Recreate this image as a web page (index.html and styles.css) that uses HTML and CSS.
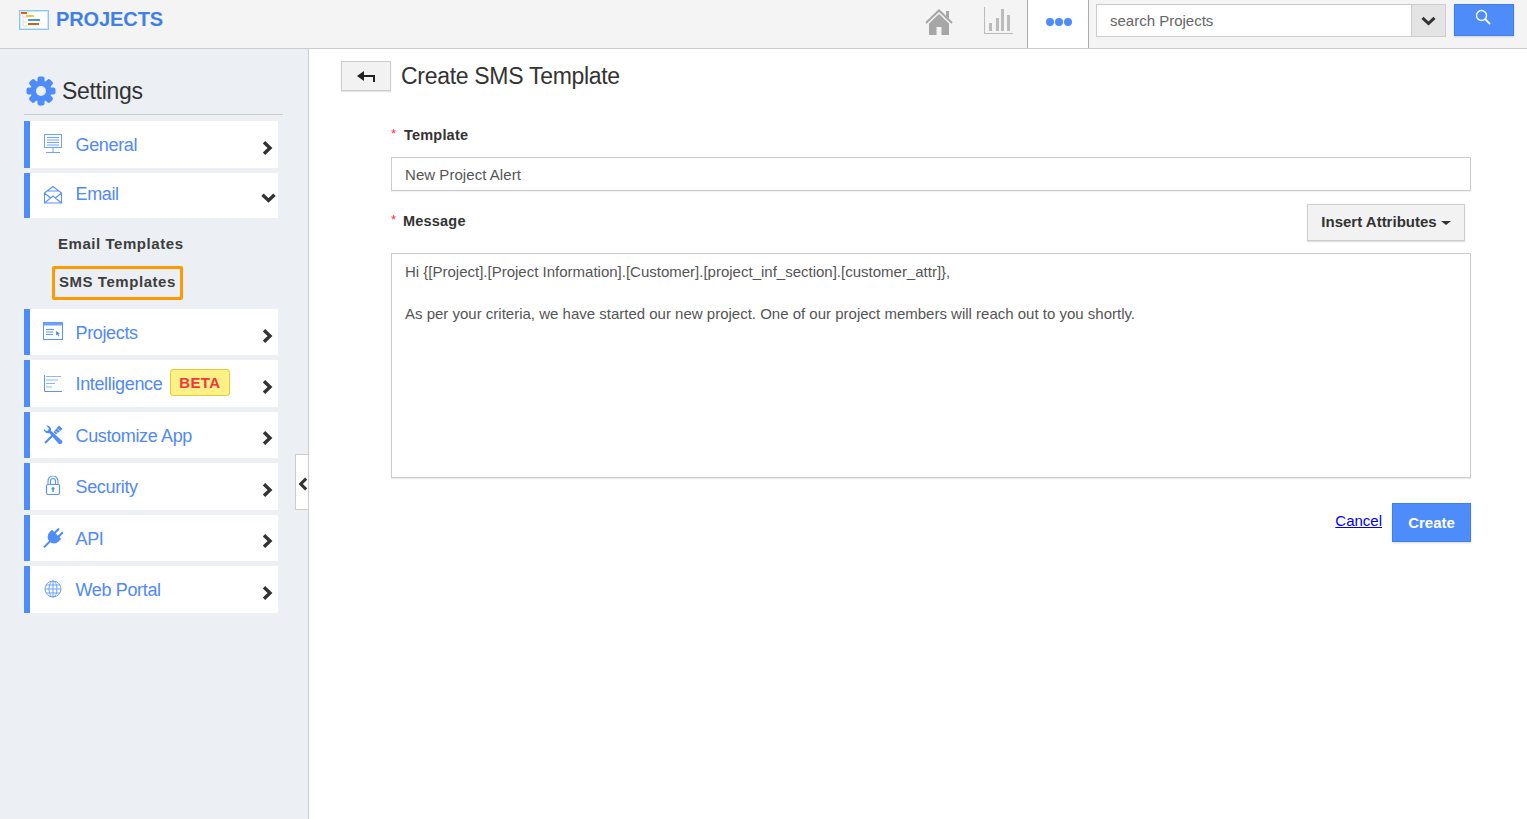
FILE: index.html
```html
<!DOCTYPE html>
<html lang="en">
<head>
<meta charset="utf-8">
<title>Create SMS Template</title>
<link rel="stylesheet" href="styles.css">
</head>
<body>
<header class="topbar">
  <svg class="logo" width="30" height="20" viewBox="0 0 30 20"><rect x=".5" y=".5" width="29" height="19" fill="#fff" stroke="#8cc4f2"/><rect x="1.500" y="1.500" width="27" height="17" fill="none" stroke="#cfe6f8"/><path d="M4 3v13h4M4 7h4M4 12h4" fill="none" stroke="#ddd"/><rect x="2" y="2" width="6" height="2" fill="#d9600f"/><rect x="7" y="5" width="8" height="2" fill="#f5c92e"/><rect x="9" y="9" width="12" height="2" fill="#3d9be0"/><rect x="9" y="13" width="11" height="2" fill="#d9600f"/></svg>
  <div class="brand">PROJECTS</div>
  <svg class="home" width="28" height="28" viewBox="0 0 28 28"><path d="M1 15 14 2.500 27 15" fill="none" stroke="#a6a6a6" stroke-width="2"/><path d="M21 3h3v8l-3-3z" fill="#a6a6a6"/><path d="M14 6 4 15.500V27h7.500v-8h5v8H24V15.500z" fill="#a6a6a6"/></svg>
  <svg class="chart" width="29" height="28" viewBox="0 0 29 28"><path d="M.5 0v26.500H29" fill="none" stroke="#bbb"/><path d="M5 16h3v8H5zM12 11h3v13h-3zM17 2h3v22h-3zM23 8h3v16h-3z" fill="#bbb"/></svg>
  <div class="more-tab">
    <svg width="28" height="10" viewBox="0 0 28 10"><circle cx="5" cy="5" r="4" fill="#4d8cf9"/><circle cx="14" cy="5" r="4" fill="#4d8cf9"/><circle cx="23" cy="5" r="4" fill="#4d8cf9"/></svg>
  </div>
  <div class="search">
    <div class="search-text">search Projects</div>
    <div class="search-drop"><svg width="15" height="11" viewBox="0 0 15 11"><path d="M1.500 1.800 7.500 7.500l6-5.700" fill="none" stroke="#333" stroke-width="3"/></svg></div>
  </div>
  <button class="search-btn" type="button"><svg width="16" height="16" viewBox="0 0 16 16"><circle cx="6.500" cy="6.500" r="5" fill="none" stroke="#fff" stroke-width="1.400"/><path d="m10 10 5 5" stroke="#fff" stroke-width="1.800"/></svg></button>
</header>

<div class="layout">
  <aside class="sidebar">
    <div class="side-title">
      <svg class="gear" width="30" height="30" viewBox="0 0 30 30">
        <g fill="#4d8cf9"><rect x="11.500" y="0.500" width="7" height="29" rx="2"/><rect x="11.500" y="0.500" width="7" height="29" rx="2" transform="rotate(45 15 15)"/><rect x="11.500" y="0.500" width="7" height="29" rx="2" transform="rotate(90 15 15)"/><rect x="11.500" y="0.500" width="7" height="29" rx="2" transform="rotate(135 15 15)"/><circle cx="15" cy="15" r="10.500"/></g>
        <circle cx="15" cy="15" r="5" fill="#eceff4"/>
      </svg>
      <span>Settings</span>
    </div>

    <a class="row row-first">
      <svg class="ico" width="20" height="20" viewBox="0 0 20 20"><g fill="none" stroke="#6ea2fa"><rect x="1.500" y=".5" width="17" height="13"/><path d="M4 3.500h12M4 6h12M4 8.500h12M4 11h12M10 14v4M3 18.500h14"/></g></svg>
      <span class="row-label">General</span>
      <svg class="chev" width="11" height="14" viewBox="0 0 11 14"><path d="m2 1.200 6 5.800-6 5.800" fill="none" stroke="#333" stroke-width="3.400"/></svg>
    </a>
    <a class="row row-open">
      <svg class="ico" width="20" height="20" viewBox="0 0 20 20"><path d="M1.500 8 10 1.500 18.500 8v10h-17zM1.500 8l6 5M18.500 8l-6 5M1.500 18l8.500-7 8.500 7M4.500 6h11" fill="none" stroke="#5a94f7" stroke-width="1.100"/></svg>
      <span class="row-label">Email</span>
      <svg class="chev-down" width="15" height="11" viewBox="0 0 15 11"><path d="M1.500 1.800 7.500 7.500l6-5.700" fill="none" stroke="#333" stroke-width="3.400"/></svg>
    </a>
    <div class="sub-list">
      <div class="sub-item">Email Templates</div>
      <div class="sub-item sub-active">SMS Templates</div>
    </div>
    <a class="row">
      <svg class="ico" width="20" height="20" viewBox="0 0 20 20"><g fill="none" stroke="#5a94f7"><rect x=".5" y=".5" width="19" height="17"/><path d="M3 7.500h8M3 10h7M3 12.500h7"/></g><rect x=".5" y=".5" width="19" height="3" fill="#6ea2fa"/><path d="m13 9 4 2.500-1.600.5 1 2-1 .5-1-2-1.200 1z" fill="#4d8cf9"/></svg>
      <span class="row-label">Projects</span>
      <svg class="chev" width="11" height="14" viewBox="0 0 11 14"><path d="m2 1.200 6 5.800-6 5.800" fill="none" stroke="#333" stroke-width="3.400"/></svg>
    </a>
    <a class="row">
      <svg class="ico" width="20" height="20" viewBox="0 0 20 20"><path d="M1.500 1v16.500H19" fill="none" stroke="#5a94f7"/><path d="M3 2.500h15M3 6h12M3 9.500h9M3 13h6" fill="none" stroke="#8db6fa" stroke-width="1.200"/></svg>
      <span class="row-label row-label-high">Intelligence</span>
      <span class="beta">BETA</span>
      <svg class="chev" width="11" height="14" viewBox="0 0 11 14"><path d="m2 1.200 6 5.800-6 5.800" fill="none" stroke="#333" stroke-width="3.400"/></svg>
    </a>
    <a class="row">
      <svg class="ico" width="20" height="20" viewBox="0 0 20 20"><path d="M.8 3.500a4.300 4.300 0 0 0 5.400 4.600L15.500 18.400a2 2 0 0 0 3.200-3L8 5.800A4.300 4.300 0 0 0 3.200.6L6 3.600 5 5.500l-2 .4z" fill="#4d8cf9"/><path d="M2 18 10.500 9.500" stroke="#4d8cf9" stroke-width="2.200"/><path d="m10.500 7 5.500-6.500 3.500 3.500L13 9.500z" fill="#4d8cf9"/><path d="m12.500 6 2.500 2.500M14.500 3.800l2.500 2.500" stroke="#fff" stroke-width=".8"/></svg>
      <span class="row-label">Customize App</span>
      <svg class="chev" width="11" height="14" viewBox="0 0 11 14"><path d="m2 1.200 6 5.800-6 5.800" fill="none" stroke="#333" stroke-width="3.400"/></svg>
    </a>
    <a class="row">
      <svg class="ico" width="20" height="20" viewBox="0 0 20 20"><path d="M5 8V5a5 5 0 0 1 10 0v3M7.500 8V5a2.500 2.500 0 0 1 5 0v3" fill="none" stroke="#5a94f7" stroke-width="1.100"/><rect x="3.500" y="8.500" width="13" height="10" rx="1.500" fill="none" stroke="#5a94f7" stroke-width="1.200"/><circle cx="10" cy="12.500" r="1.500" fill="#4d8cf9"/><rect x="9.300" y="13" width="1.400" height="3" fill="#4d8cf9"/></svg>
      <span class="row-label">Security</span>
      <svg class="chev" width="11" height="14" viewBox="0 0 11 14"><path d="m2 1.200 6 5.800-6 5.800" fill="none" stroke="#333" stroke-width="3.400"/></svg>
    </a>
    <a class="row">
      <svg class="ico" width="20" height="20" viewBox="0 0 20 20"><g transform="rotate(45 10 10)" fill="#4d8cf9"><rect x="6.500" y="-1" width="2.200" height="7" rx="1"/><rect x="11.800" y="-1" width="2.200" height="7" rx="1"/><path d="M3.500 5h13v3.500a6.500 6.500 0 0 1-13 0z"/><rect x="9.200" y="13" width="2" height="10"/></g></svg>
      <span class="row-label">API</span>
      <svg class="chev" width="11" height="14" viewBox="0 0 11 14"><path d="m2 1.200 6 5.800-6 5.800" fill="none" stroke="#333" stroke-width="3.400"/></svg>
    </a>
    <a class="row row-last">
      <svg class="ico" width="20" height="20" viewBox="0 0 20 20"><g fill="none" stroke="#6ea2fa"><circle cx="10" cy="10" r="8"/><ellipse cx="10" cy="10" rx="4" ry="8"/><path d="M10 2v16M2 10h16M3 6h14M3 14h14"/></g></svg>
      <span class="row-label">Web Portal</span>
      <svg class="chev" width="11" height="14" viewBox="0 0 11 14"><path d="m2 1.200 6 5.800-6 5.800" fill="none" stroke="#333" stroke-width="3.400"/></svg>
    </a>

    <div class="collapse"><svg width="11" height="14" viewBox="0 0 11 14"><path d="M9 1.200 3 7l6 5.800" fill="none" stroke="#333" stroke-width="3.400"/></svg></div>
  </aside>

  <main class="content">
    <div class="page-head">
      <button class="back" type="button"><svg width="18" height="12" viewBox="0 0 18 12"><path d="M7 0 0 5l7 5z" fill="#222"/><path d="M5 5h12v6" fill="none" stroke="#222" stroke-width="2"/></svg></button>
      <h1 class="page-title">Create SMS Template</h1>
    </div>
    <form class="form">
      <div class="label label-template"><span class="req">*</span><span class="label-text">Template</span></div>
      <div class="field">New Project Alert</div>
      <div class="message-head">
        <div class="label"><span class="req">*</span><span class="label-text label-text-msg">Message</span></div>
        <button class="insert" type="button">Insert Attributes<span class="caret"></span></button>
      </div>
      <div class="area">
        <p class="area-line">Hi {[Project].[Project Information].[Customer].[project_inf_section].[customer_attr]},</p>
        <p class="area-line">&nbsp;</p>
        <p class="area-line">As per your criteria, we have started our new project. One of our project members will reach out to you shortly.</p>
      </div>
      <div class="actions">
        <a class="cancel" href="#">Cancel</a>
        <button class="create" type="button">Create</button>
      </div>
    </form>
  </main>
</div>
</body>
</html>
```

FILE: styles.css
```css
* { box-sizing: border-box; }
html, body { margin: 0; height: 100%; overflow: hidden; }
body { font-family: "Liberation Sans", Arial, sans-serif; color: #333; background: #fff; display: flex; flex-direction: column; }

.topbar { height: 49px; flex: none; display: flex; align-items: flex-start; background: #f4f4f4; border-bottom: 1px solid #ccc; padding-left: 19px; }
.logo { margin-top: 10px; flex: none; }
.brand { margin-left: 7px; margin-top: 7px; font-size: 20px; line-height: 24px; font-weight: 700; color: #3f7fe8; letter-spacing: -.1px; }
.home { margin-left: auto; margin-top: 8px; }
.chart { margin-left: 31px; margin-top: 7px; }
.more-tab { width: 62px; height: 48px; margin-left: 14px; background: #fff; border-left: 1px solid #aaa; border-right: 1px solid #aaa; display: flex; align-items: center; justify-content: center; padding: 0 0 4px 2px; }
.search { width: 350px; height: 33px; margin-left: 7px; margin-top: 4px; display: flex; background: #fff; border: 1px solid #ccc; }
.search-text { flex: 1; padding-left: 13px; font-size: 15px; line-height: 31px; color: #666; }
.search-drop { width: 34px; background: #e4e4e4; border-left: 1px solid #ccc; display: flex; align-items: center; justify-content: center; padding-top: 2px; }
.search-btn { width: 60px; height: 32px; margin-left: 8px; margin-right: 13px; margin-top: 4px; padding: 0 2px 3px 0; background: #4d8cf9; border: 1px solid #3f7fe8; box-shadow: 0 1px 2px rgba(0,0,0,.15); }

.layout { flex: 1; display: flex; min-height: 0; }
.sidebar { position: relative; flex: none; width: 309px; background: #eceff4; border-right: 1px solid #ccc; padding: 0 0 0 24px; }
.side-title { width: 259px; height: 66px; padding-top: 27px; display: flex; align-items: flex-start; border-bottom: 1px solid #ccc; margin-bottom: 6.2px; font-size: 23px; line-height: 30px; color: #333; }
.side-title span { letter-spacing: -.3px; margin-left: 6px; }
.gear { margin-left: 2px; flex: none; }

.row { width: 254px; height: 46.4px; margin-bottom: 5px; display: flex; align-items: center; background: #fff; border-left: 6px solid #4d8cf9; padding-left: 13px; }
.row-open { height: 45px; margin-bottom: 0; }
.row-last { height: 47px; }
.ico { flex: none; }
.row-label { margin-left: 12.5px; margin-top: 3px; font-size: 18px; letter-spacing: -.35px; color: #5189f7; white-space: nowrap; }
.row-open .row-label { margin-top: 0; margin-bottom: 1px; }
.row-label-high { margin-top: 1px; }
.chev { flex: none; margin-left: auto; margin-right: 5px; margin-top: 7px; }
.chev-down { flex: none; margin-left: auto; margin-right: 2px; margin-top: 6px; }
.beta { margin-left: 7.5px; width: 60px; height: 27px; background: #fdf084; border: 1px solid #e2cc3a; border-radius: 3px; color: #f0373f; font-size: 15px; line-height: 25px; font-weight: 700; text-align: center; letter-spacing: .4px; margin-bottom: 2px; }

.sub-list { height: 91.400px; padding-left: 28px; padding-top: 14px; }
.sub-item { width: 131px; height: 30px; padding-left: 6px; font-size: 15px; line-height: 24px; font-weight: 700; color: #3d3d3d; letter-spacing: .55px; white-space: nowrap; }
.sub-active { height: 34px; margin-top: 4px; padding-left: 4px; border: 3px solid #ff9900; border-radius: 2px; line-height: 26px; }

.collapse { position: absolute; left: 295px; top: 405px; width: 13px; height: 56px; background: #fff; border: 1px solid #ccc; border-right: none; display: flex; align-items: center; padding: 4px 0 0 2px; }

.content { flex: 1; min-width: 0; padding: 12px 56px 0 32px; }
.page-head { display: flex; align-items: flex-start; }
.back { width: 50px; height: 30px; padding: 4px 0 0; background: #f2f2f2; border: 1px solid #ccc; box-shadow: 0 1px 1px rgba(0,0,0,.1); }
.page-title { margin: 0 0 0 10px; font-size: 23px; line-height: 30px; font-weight: 400; color: #333; letter-spacing: -.3px; }

.form { padding-left: 50px; }
.label { display: flex; align-items: flex-start; font-size: 14.500px; line-height: 20px; font-weight: 700; color: #333; }
.label-template { margin-top: 34px; }
.req { color: #f33; font-weight: 400; font-size: 13px; line-height: 16px; width: 13px; margin-top: 1px; }
.label-text { letter-spacing: .2px; }
.label-text-msg { margin-left: -1px; }
.field { margin-top: 12px; height: 34px; padding-left: 13px; border: 1px solid #ccc; font-size: 15px; letter-spacing: .05px; line-height: 33px; color: #555; box-shadow: 0 1px 1px rgba(0,0,0,.05); }
.message-head { display: flex; justify-content: space-between; align-items: flex-start; margin-top: 13px; padding-right: 6px; }
.message-head .label { margin-top: 7px; }
.insert { width: 158px; height: 37px; padding: 0 0 2px; background: #f2f2f2; border: 1px solid #ccc; box-shadow: 0 1px 1px rgba(0,0,0,.12); font: 700 15px "Liberation Sans", Arial, sans-serif; color: #333; }
.caret { display: inline-block; margin-left: 4px; vertical-align: middle; border-top: 4px solid #333; border-left: 5px solid transparent; border-right: 5px solid transparent; }
.area { margin-top: 12px; height: 225px; padding: 7px 13px; border: 1px solid #ccc; box-shadow: 0 1px 1px rgba(0,0,0,.08); }
.area-line { margin: 0; font-size: 15px; line-height: 21px; color: #555; }
.actions { margin-top: 25px; display: flex; justify-content: flex-end; align-items: flex-start; }
.cancel { margin-top: 8px; font-size: 15px; line-height: 20px; color: #0000ee; }
.create { width: 79px; height: 39px; margin-left: 10px; padding: 0; background: #4d8cf9; border: 1px solid #3f7fe8; box-shadow: 0 1px 2px rgba(0,0,0,.15); color: #fff; font: 700 15px "Liberation Sans", Arial, sans-serif; }
```
